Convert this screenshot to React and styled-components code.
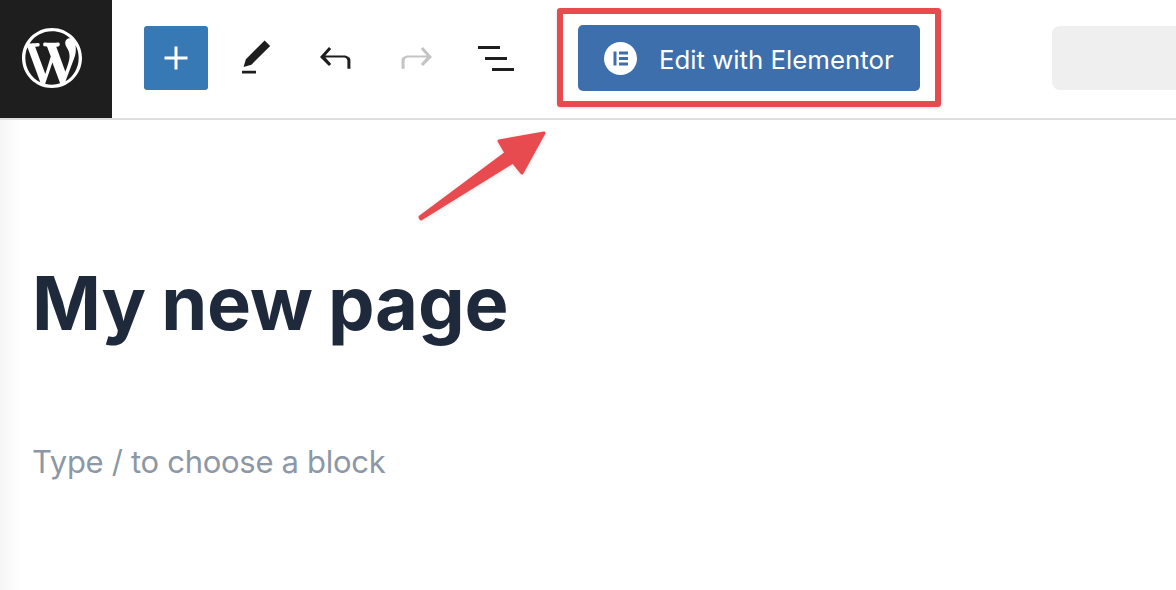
import styled, { createGlobalStyle } from "styled-components";

const GlobalStyle = createGlobalStyle`
  html, body {
    margin: 0;
    padding: 0;
    background: #fff;
    overflow: hidden;
  }
  body {
    font-family: Inter, "Liberation Sans", sans-serif;
  }
`;

const Page = styled.div`
  position: relative;
  width: 1176px;
  height: 590px;
  overflow: hidden;
  background: #fff;
`;

const Toolbar = styled.header`
  display: flex;
  align-items: center;
  box-sizing: border-box;
  height: 120px;
  padding-bottom: 2px;
  border-bottom: 2px solid #dedede;
`;

const LogoBox = styled.div`
  display: flex;
  align-items: center;
  justify-content: center;
  align-self: flex-start;
  flex-shrink: 0;
  box-sizing: border-box;
  width: 112px;
  height: 118px;
  padding: 0 8px 2px 0;
  background: #1e1e1e;
  color: #fff;
`;

const Tools = styled.div`
  display: flex;
  align-items: center;
  flex-shrink: 0;
  gap: 16px;
  margin-left: 32px;
`;

const AddButton = styled.button`
  display: flex;
  align-items: center;
  justify-content: center;
  width: 64px;
  height: 64px;
  padding: 0;
  border: none;
  border-radius: 3px;
  background: #3679b5;
  color: #fff;
`;

const IconButton = styled.button`
  display: flex;
  align-items: center;
  justify-content: center;
  width: 64px;
  height: 64px;
  padding: 0;
  border: none;
  background: none;
  color: ${(p) => (p.$disabled ? "#c4c4c4" : "#1e1e1e")};
`;

const ElementorWrap = styled.div`
  position: relative;
  flex-shrink: 0;
  margin-left: 50px;
`;

const ElementorButton = styled.button`
  display: flex;
  align-items: center;
  width: 342px;
  height: 66px;
  padding: 0 0 0 26px;
  border: none;
  border-radius: 5px;
  background: #3c6fab;
  color: #fff;
  font-family: Inter, "Liberation Sans", sans-serif;
  font-size: 25.8px;
  font-weight: 400;
`;

const ElementorLabel = styled.span`
  margin-left: 22px;
  padding-top: 2px;
  white-space: nowrap;
`;

const Highlight = styled.div`
  position: absolute;
  top: -17px;
  left: -21px;
  right: -21px;
  bottom: -16px;
  border: 6px solid #e84b4f;
  border-radius: 3px;
  box-shadow: 0 1px 3px rgba(0, 0, 0, 0.15);
`;

const SearchStub = styled.div`
  width: 130px;
  height: 64px;
  margin-left: 132px;
  border-radius: 8px 0 0 8px;
  background: #efefef;
  flex-shrink: 0;
`;

const Arrow = styled.svg`
  position: absolute;
  top: 120px;
  left: 400px;
  filter: drop-shadow(0 1px 2px rgba(0, 0, 0, 0.12));
`;

const Editor = styled.main`
  height: 470px;
  padding: 137px 0 0 32px;
  box-sizing: border-box;
  background: linear-gradient(90deg, #f6f6f6, #fff 22px);
`;

const Title = styled.h1`
  margin: 0;
  font-size: 74px;
  line-height: 92px;
  font-weight: 700;
  letter-spacing: -0.2px;
  word-spacing: -2px;
  color: #1e2a3c;
`;

const Placeholder = styled.p`
  margin: 93px 0 0;
  font-size: 31px;
  line-height: 40px;
  letter-spacing: -0.3px;
  color: #8d97a6;
`;

const WordPressLogo = () => (
  <svg width="60" height="60" viewBox="0 0 20 20" fill="currentColor">
    <path d="M20 10c0-5.51-4.49-10-10-10C4.48 0 0 4.49 0 10c0 5.52 4.48 10 10 10 5.51 0 10-4.48 10-10zM7.78 15.37L4.37 6.22c.55-.02 1.17-.08 1.17-.08.5-.06.44-1.13-.06-1.11 0 0-1.45.11-2.37.11-.18 0-.37 0-.58-.01C4.12 2.69 6.87 1.11 10 1.11c2.33 0 4.45.87 6.05 2.34-.68-.11-1.65.39-1.65 1.58 0 .74.45 1.36.9 2.1.35.61.55 1.36.55 2.46 0 1.49-1.4 5-1.4 5l-3.03-8.37c.54-.02.82-.17.82-.17.5-.05.44-1.25-.06-1.22 0 0-1.44.12-2.38.12-.87 0-2.33-.12-2.33-.12-.5-.03-.56 1.2-.06 1.22l.92.08 1.26 3.41zM17.41 10c.24-.64.74-1.87.43-4.25.7 1.29 1.05 2.71 1.05 4.25 0 3.29-1.73 6.24-4.4 7.78.97-2.59 1.94-5.2 2.92-7.78zM6.1 18.09C3.12 16.65 1.11 13.53 1.11 10c0-1.3.23-2.48.72-3.59C3.25 10.3 4.67 14.2 6.1 18.09zm4.03-6.63l2.58 6.98c-.86.29-1.76.45-2.71.45-.79 0-1.57-.11-2.29-.33.81-2.38 1.62-4.74 2.42-7.1z" />
  </svg>
);

const PlusIcon = () => (
  <svg width="24" height="24" viewBox="0 0 24 24" fill="currentColor">
    <rect x="0.5" y="10.5" width="23" height="3" />
    <rect x="10.5" y="0.5" width="3" height="23" />
  </svg>
);

const PenIcon = () => (
  <svg width="42" height="42" viewBox="0 0 24 24" fill="currentColor">
    <path d="M20.1 5.1L16.9 2 6.2 12.7l-1.3 4.4 4.5-1.3L20.1 5.1zM4 20.8h8v-1.5H4v1.5z" />
  </svg>
);

const UndoIcon = ({ flip }) => (
  <svg
    width="48"
    height="48"
    viewBox="0 0 24 24"
    fill="currentColor"
    style={flip ? { transform: "scaleX(-1)" } : undefined}
  >
    <path d="M18.3 11.7c-.6-.6-1.4-.9-2.3-.9H6.7l2.9-3.3-1.1-1-4.5 5L8.5 16l1.1-1-2.9-3.3H16c.5 0 .9.2 1.2.5.3.3.5.7.5 1.2v4h1.5v-4c.1-.8-.3-1.6-.9-2.2z" />
  </svg>
);

const ListIcon = () => (
  <svg width="36" height="25" viewBox="0 0 36 25" fill="currentColor">
    <rect x="0" y="0" width="22" height="3" />
    <rect x="7" y="11" width="22" height="3" />
    <rect x="14" y="22" width="22" height="3" />
  </svg>
);

const ElementorIcon = () => (
  <svg width="33" height="33" viewBox="0 0 33 33">
    <circle cx="16.5" cy="16.5" r="16.5" fill="#fff" />
    <rect x="9.5" y="9.5" width="3" height="14" fill="#3c6fab" />
    <rect x="15" y="9.5" width="9" height="3" fill="#3c6fab" />
    <rect x="15" y="15" width="9" height="3" fill="#3c6fab" />
    <rect x="15" y="20.5" width="9" height="3" fill="#3c6fab" />
  </svg>
);

export default function App() {
  return (
    <Page>
      <GlobalStyle />
      <Toolbar>
        <LogoBox>
          <WordPressLogo />
        </LogoBox>
        <Tools>
          <AddButton aria-label="Add block">
            <PlusIcon />
          </AddButton>
          <IconButton aria-label="Tools">
            <PenIcon />
          </IconButton>
          <IconButton aria-label="Undo">
            <UndoIcon />
          </IconButton>
          <IconButton aria-label="Redo" $disabled>
            <UndoIcon flip />
          </IconButton>
          <IconButton aria-label="List view">
            <ListIcon />
          </IconButton>
        </Tools>
        <ElementorWrap>
          <ElementorButton>
            <ElementorIcon />
            <ElementorLabel>Edit with Elementor</ElementorLabel>
          </ElementorButton>
          <Highlight />
        </ElementorWrap>
        <SearchStub />
      </Toolbar>
      <Editor>
        <Title>My new page</Title>
        <Placeholder>Type / to choose a block</Placeholder>
      </Editor>
      <Arrow width="160" height="110" viewBox="0 0 160 110">
        <path
          d="M20 97 L106 33 L99 21 L144 13 L122 53 L113 42 L21 99 Z"
          fill="#e84b4f"
          stroke="#e84b4f"
          strokeWidth="3"
          strokeLinejoin="round"
        />
      </Arrow>
    </Page>
  );
}
